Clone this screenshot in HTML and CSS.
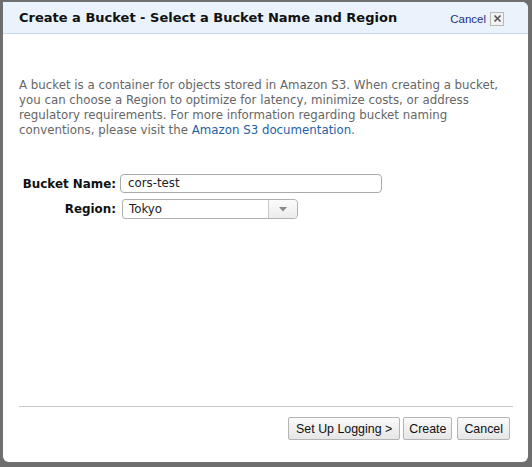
FILE: index.html
```html
<!DOCTYPE html>
<html>
<head>
<meta charset="utf-8">
<link rel="stylesheet" href="styles.css">
</head>
<body>
<div class="dialog">
  <div class="header">
    <div class="title">Create a Bucket - Select a Bucket Name and Region</div>
    <div class="hactions">
      <span class="hcancel">Cancel</span>
      <span class="xbtn"><svg width="9" height="9" viewBox="0 0 9 9"><path d="M1.5 1.5L7.5 7.5M7.5 1.5L1.5 7.5" stroke="#555" stroke-width="1.6"/></svg></span>
    </div>
  </div>
  <div class="body">
    <p class="intro">A bucket is a container for objects stored in Amazon S3. When creating a bucket,<br>you can choose a Region to optimize for latency, minimize costs, or address<br>regulatory requirements. For more information regarding bucket naming<br>conventions, please visit the <a class="link">Amazon S3 documentation</a>.</p>
    <div class="form">
      <div class="row">
        <label class="lbl">Bucket Name:</label>
        <div class="input">cors-test</div>
      </div>
      <div class="row">
        <label class="lbl">Region:</label>
        <div class="select">
          <span class="sval">Tokyo</span>
          <span class="sarrow"><svg width="8" height="5" viewBox="0 0 8 5"><path d="M0 0H8L4 4.5Z" fill="#888"/></svg></span>
        </div>
      </div>
    </div>
  </div>
  <div class="footer">
    <button class="btn btn-log">Set Up Logging &gt;</button>
    <button class="btn btn-create">Create</button>
    <button class="btn btn-cancel">Cancel</button>
  </div>
</div>
</body>
</html>
```
FILE: styles.css
```css
html, body {
  margin: 0;
  padding: 0;
}
body {
  width: 532px;
  height: 467px;
  background: #6e6e6e;
  overflow: hidden;
  padding: 2px 4px 5px 3px;
  box-sizing: border-box;
}
.dialog {
  background: #fff;
  height: 460px;
  border-radius: 0 6px 6px 6px;
  display: flex;
  flex-direction: column;
  overflow: hidden;
  box-shadow: 0 0 1px #999;
}
.header {
  background: #eaf2fc;
  border-bottom: 1px solid #c6dcee;
  height: 31px;
  display: flex;
  align-items: center;
  justify-content: space-between;
  padding: 0 24px 0 16px;
}
.title {
  font-family: "DejaVu Sans", Verdana, sans-serif;
  font-weight: bold;
  font-size: 13px;
  color: #111;
}
.hactions {
  display: flex;
  align-items: center;
  gap: 4px;
  padding-top: 2px;
}
.hcancel {
  font-family: "Liberation Sans", Arial, sans-serif;
  font-size: 11.5px;
  color: #1f2f8c;
}
.xbtn {
  width: 12px;
  height: 12px;
  border: 1px solid #b8b8b8;
  background: #f2f2f2;
  display: flex;
  align-items: center;
  justify-content: center;
}
.body {
  flex: 1;
  padding: 0 16px;
}
.intro {
  font-family: "DejaVu Sans", Verdana, sans-serif;
  font-size: 11.8px;
  line-height: 15px;
  color: #666;
  margin: 44px 0 0 0;
  white-space: nowrap;
}
.link {
  color: #1f5fa6;
}
.form {
  margin-top: 36px;
  display: flex;
  flex-direction: column;
  gap: 6px;
}
.row {
  display: flex;
  align-items: center;
}
.lbl {
  width: 97px;
  text-align: right;
  font-family: "DejaVu Sans", Verdana, sans-serif;
  font-weight: bold;
  font-size: 11.9px;
  color: #111;
  margin-right: 4px;
}
.row:nth-child(2) .lbl {
  margin-right: 6px;
}
.input {
  width: 253px;
  height: 17px;
  border: 1px solid #aaa;
  border-radius: 4px;
  font-family: "DejaVu Sans", Verdana, sans-serif;
  font-size: 11.8px;
  color: #222;
  line-height: 17px;
  padding-left: 7px;
}
.select {
  width: 174px;
  height: 18px;
  border: 1px solid #b0b0b0;
  border-radius: 3px 4px 4px 3px;
  display: flex;
  font-family: "DejaVu Sans", Verdana, sans-serif;
  font-size: 11.8px;
  color: #222;
}
.sval {
  flex: 1;
  padding-left: 6px;
  line-height: 18px;
}
.sarrow {
  width: 28px;
  border-left: 1px solid #c8c8c8;
  background: linear-gradient(#fcfcfc, #ececec);
  border-radius: 0 4px 4px 0;
  display: flex;
  align-items: center;
  justify-content: center;
}
.footer {
  margin: 0 15px 0 16px;
  border-top: 1px solid #c9c9c9;
  padding: 10px 3px 22px 0;
  display: flex;
  justify-content: flex-end;
  gap: 3px;
}
.btn {
  font-family: "Liberation Sans", Arial, sans-serif;
  font-size: 12.4px;
  color: #111;
  background: linear-gradient(#fafafa, #e6e6e6);
  border: 1px solid #b4b4b4;
  border-radius: 2px;
  height: 23px;
  padding: 0 6px;
  margin: 0;
}
.btn-log {
  padding: 0 7px;
}
.btn-create {
  padding: 0 5px;
}
.btn-cancel {
  margin-left: 2px;
}
```
